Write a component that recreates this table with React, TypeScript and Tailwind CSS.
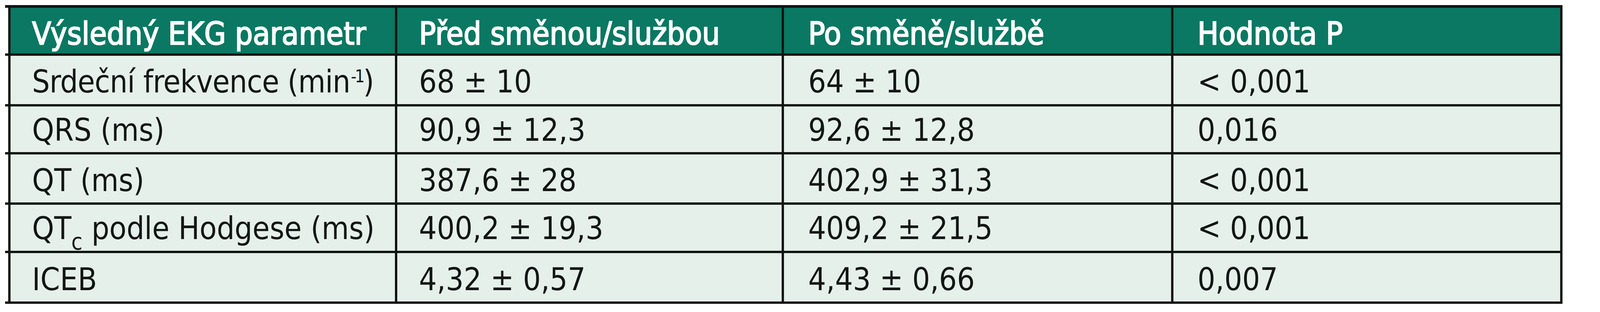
import React from "react";

const LINE = "border-[#0f1512]";

type Row = { h: string; pt: string; cells: React.ReactNode[]; header?: boolean };

const rows: Row[] = [
  {
    h: "h-[124px]",
    pt: "pt-[27px]",
    header: true,
    cells: ["Výsledný EKG parametr", "Před směnou/službou", "Po směně/službě", "Hodnota P"],
  },
  {
    h: "h-[130px]",
    pt: "pt-[27px]",
    cells: [
      <>
        <span className="tracking-[-0.9px]">Srdeční frekvence (min</span>
        <sup className="text-[44px] -top-[26px] ml-[2px] tracking-[-4px]">-1</sup>)
      </>,
      "68 ± 10",
      "64 ± 10",
      "< 0,001",
    ],
  },
  { h: "h-[123px]", pt: "pt-[21px]", cells: ["QRS (ms)", "90,9 ± 12,3", "92,6 ± 12,8", "0,016"] },
  { h: "h-[129px]", pt: "pt-[27px]", cells: ["QT (ms)", "387,6 ± 28", "402,9 ± 31,3", "< 0,001"] },
  {
    h: "h-[124px]",
    pt: "pt-[21px]",
    cells: [
      <>
        QT<sub className="text-[58px] -bottom-[27px]">c</sub> podle Hodgese (ms)
      </>,
      "400,2 ± 19,3",
      "409,2 ± 21,5",
      "< 0,001",
    ],
  },
  { h: "h-[130px]", pt: "pt-[28px]", cells: ["ICEB", "4,32 ± 0,57", "4,43 ± 0,66", "0,007"] },
];

const pads = ["pl-[55px]", "pl-[56px]", "pl-[62px]", "pl-[62px]"];

export default function App() {
  return (
    <div className="w-full h-[800px] bg-white pt-[13px] pl-[13px] pr-[96px] font-['DejaVu_Sans_Condensed','DejaVu_Sans',sans-serif] text-[80px] leading-none">
      <div className={`w-full border-b-[6px] ${LINE}`}>
        {rows.map((r, i) => (
          <div key={i} className={`flex pl-[8px] ${i === 0 ? "border-t-[7px]" : "border-t-[6px]"} ${LINE} ${r.h}`}>
            {r.cells.map((c, j) => (
              <div
                key={j}
                className={`flex-1 min-w-0 ${pads[j]} ${r.pt} border-l-[6px] ${j === 3 ? "border-r-[6px]" : ""} ${LINE} flex items-start whitespace-nowrap ${
                  r.header
                    ? "bg-[#0a7862] text-white [-webkit-text-stroke:2.5px_#ffffff]"
                    : "bg-[#e6f0eb] text-[#121614]"
                }`}
              >
                <span>{c}</span>
              </div>
            ))}
          </div>
        ))}
      </div>
    </div>
  );
}
